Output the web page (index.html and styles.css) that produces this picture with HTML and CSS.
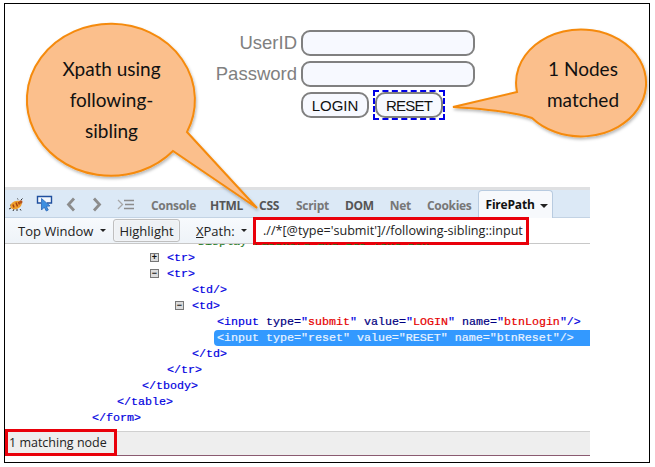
FILE: index.html
```html
<!DOCTYPE html>
<html lang="en">
<head>
<meta charset="utf-8">
<title>Xpath using following-sibling</title>
<link rel="stylesheet" href="styles.css">
</head>
<body>
<div class="frame">
  <section class="login">
    <div class="login-grid">
      <label class="lbl">UserID</label><div class="field"></div>
      <label class="lbl">Password</label><div class="field"></div>
      <span></span>
      <div class="btns">
        <button class="btn">LOGIN</button>
        <span class="focus"><button class="btn btn-reset">RESET</button></span>
      </div>
    </div>
  </section>

  <section class="panel">
    <div class="tabs">
      <div class="tab-icons">
        <svg class="ic" width="16" height="14" viewBox="0 0 16 14"><path d="M1 11l2-1M2 7l2 .5M5 13l1-2M9 13v-2M12 11l1 1.500M13 2l1.500-1.500M10 1.500L9.500.5" stroke="#333" stroke-width="1"/><ellipse cx="8" cy="7" rx="6" ry="4" fill="#eea02e" transform="rotate(-22 8 7)"/><path d="M5 6.500l1 3M8 4.500l1.500 4M10.500 4l1 2.500" stroke="#a8420f" stroke-width="1.500"/><circle cx="12.800" cy="4" r="1.700" fill="#b5521a"/></svg>
        <svg class="ic ic-inspect" width="17" height="17" viewBox="0 0 17 17"><path d="M5 8H1.500V1.500h14V8H11" fill="#f4f8fd" stroke="#1f4f9e" stroke-width="1.400"/><path d="M5.500 3.500V15l2.800-2.800 2 3.800 2-1-2-3.700 3.700-.4z" fill="#3d8fe0" stroke="#2a66b8" stroke-width=".8"/></svg>
        <svg class="ic ic-back" width="10" height="15" viewBox="0 0 10 15"><path d="M8 1.500L2.500 7.500 8 13.500" fill="none" stroke="#8c8c8c" stroke-width="2.800"/></svg>
        <svg class="ic ic-fwd" width="10" height="15" viewBox="0 0 10 15"><path d="M2 1.500L7.500 7.500 2 13.500" fill="none" stroke="#8c8c8c" stroke-width="2.800"/></svg>
        <svg class="ic ic-cmd" width="17" height="11" viewBox="0 0 17 11"><path d="M1 1l4.500 4.500L1 10" fill="none" stroke="#a8a8a8" stroke-width="1.300"/><path d="M7 1.500h10M8 5.500h9M7 9.500h10" stroke="#8c8c8c" stroke-width="1.300"/></svg>
      </div>
      <nav class="tab-list">
        <span class="tab tab-dim tab-console">Console</span>
        <span class="tab tab-html">HTML</span>
        <span class="tab tab-css">CSS</span>
        <span class="tab tab-dim tab-script">Script</span>
        <span class="tab tab-dom">DOM</span>
        <span class="tab tab-dim tab-net">Net</span>
        <span class="tab tab-dim tab-cookies">Cookies</span>
        <span class="tab-active">FirePath <i class="caret"></i></span>
      </nav>
    </div>
    <div class="toolbar">
      <span class="tool tool-window">Top Window <i class="caret caret-sm"></i></span>
      <span class="tool tool-highlight">Highlight</span>
      <span class="tool tool-xpath"><u>X</u>Path: <i class="caret caret-sm"></i></span>
      <div class="expr">.//*[@type='submit']//following-sibling::input</div>
    </div>
    <div class="tree">
      <div class="row row-clipped comment">Display Password and Its Text box</div>
      <div class="row l3"><span class="tw">+</span><span class="t">&lt;tr&gt;</span></div>
      <div class="row l3"><span class="tw">&minus;</span><span class="t">&lt;tr&gt;</span></div>
      <div class="row l4"><span class="t">&lt;td/&gt;</span></div>
      <div class="row l4"><span class="tw">&minus;</span><span class="t">&lt;td&gt;</span></div>
      <div class="row l5"><span class="t">&lt;input</span> <span class="a">type=</span><span class="t">"</span><span class="v">submit</span><span class="t">"</span> <span class="a">value=</span><span class="t">"</span><span class="v">LOGIN</span><span class="t">"</span> <span class="a">name=</span><span class="t">"</span><span class="v">btnLogin</span><span class="t">"/&gt;</span></div>
      <div class="row l5 selected">&lt;input type="reset" value="RESET" name="btnReset"/&gt;</div>
      <div class="row l4"><span class="t">&lt;/td&gt;</span></div>
      <div class="row l3"><span class="t">&lt;/tr&gt;</span></div>
      <div class="row l2"><span class="t">&lt;/tbody&gt;</span></div>
      <div class="row l1"><span class="t">&lt;/table&gt;</span></div>
      <div class="row l0"><span class="t">&lt;/form&gt;</span></div>
    </div>
    <div class="status"><span class="status-box">1 matching node</span></div>
  </section>

  <svg class="callouts" width="644" height="458" viewBox="0 0 644 458">
    <defs><filter id="sh" x="-10%" y="-10%" width="125%" height="125%"><feDropShadow dx="1" dy="2" stdDeviation="1.500" flood-color="#000" flood-opacity=".28"/></filter></defs>
    <path filter="url(#sh)" d="M168 147 A84 76 0 1 1 182 128 L252 204 Z" fill="#fbbf8c" stroke="#f58a0b" stroke-width="2"/>
    <path filter="url(#sh)" d="M512 88 A65 53.500 0 1 1 527 114 C510 108 480 105 448 103 Z" fill="#fbbf8c" stroke="#f58a0b" stroke-width="2"/>
  </svg>
  <div class="note note-left">Xpath using<br>following-<br>sibling</div>
  <div class="note note-right">1 Nodes<br>matched</div>
</div>
</body>
</html>
```
FILE: styles.css
```css
*, *::before { box-sizing: border-box; }
html, body { margin: 0; padding: 0; background: #fff; }
body { width: 655px; height: 467px; overflow: hidden; padding: 3px 0 0 4px; font-family: "Liberation Sans", Arial, sans-serif; }

.frame { position: relative; width: 646px; height: 460px; border: 1px solid #000; background: #fff; }

/* login form */
.login { height: 183px; padding: 26px 0 0 196px; }
.login-grid { display: grid; grid-template-columns: 96px 174px; grid-auto-rows: 26px; column-gap: 4px; row-gap: 5px; align-items: center; }
.lbl { text-align: right; color: #808080; font-size: 18.500px; }
.field { height: 26px; border: 2px solid #808080; border-radius: 9px; background: #f7f9ff; }
.btns { display: flex; align-items: center; gap: 6px; }
.btn { display: block; width: 68px; height: 26px; padding: 0; border: 2px solid #808080; border-radius: 10px; background: #f7f9ff; color: #111; font: 15px "Liberation Sans", Arial, sans-serif; }
.btn-reset { letter-spacing: -.8px; }
.focus { display: block; outline: 2px dashed #0000e6; }

/* panel */
.panel { width: 585px; height: 269px; display: flex; flex-direction: column; font-family: "Open Sans", "Liberation Sans", sans-serif; }
.tabs { height: 31px; flex: none; display: flex; background: #dce9f6; border-top: 3px solid #dfe0e2; border-bottom: 1px solid #c3d3e4; }
.tab-icons { width: 146px; flex: none; display: flex; align-items: center; padding-top: 2px; }
.ic { flex: none; }
.ic:first-child { margin-left: 3px; }
.ic-inspect { margin: -3px 0 0 12px; }
.ic-back { margin-left: 13px; }
.ic-fwd { margin-left: 16px; }
.ic-cmd { margin-left: 15px; }
.tab-list { display: flex; align-items: center; flex: 1; }
.tab { font-size: 12px; font-weight: 700; color: #555; padding-top: 3px; letter-spacing: -.3px; }
.tab-dim { color: #777; }
.tab-console { margin-right: 14px; }
.tab-html { margin-right: 16px; }
.tab-css { margin-right: 17px; }
.tab-script { margin-right: 16px; }
.tab-dom { margin-right: 16px; }
.tab-net { margin-right: 16px; }
.tab-cookies { margin-right: 6px; }
.tab-active { align-self: stretch; width: 75px; margin-bottom: -1px; padding: 5px 0 0 7px; font-size: 12px; font-weight: 700; color: #111; letter-spacing: -.2px; background: #f7f9fc; border: 1px solid #b8cbe0; border-bottom: 0; border-radius: 4px 4px 0 0; }
.caret { display: inline-block; width: 0; height: 0; margin: 0 0 1px 2px; border: 4px solid transparent; border-top-color: #222; border-bottom: 0; }
.caret-sm { border-width: 3px; border-bottom: 0; margin-left: 3px; vertical-align: 2px; }

.toolbar { height: 26px; flex: none; display: flex; align-items: stretch; position: relative; background: linear-gradient(#f7fafd, #eef3f8); border-bottom: 1px solid #c8c8c8; font-size: 13px; color: #222; }
.tool { display: flex; align-items: center; white-space: pre; }
.tool-window { width: 108px; padding-left: 13px; }
.tool-highlight { width: 67px; margin-top: 1px; margin-bottom: 1px; justify-content: center; background: #eef1f4; border: 1px solid #bfbfbf; border-radius: 3px; box-shadow: inset 0 0 2px #fff; }
.tool-xpath { width: 74px; padding-left: 16px; }
.expr { flex: 1; display: flex; align-items: center; padding-left: 9px; background: #fff; font-size: 12.600px; position: relative; }
.expr::before { content: ""; position: absolute; left: -1px; top: -1px; width: 276px; height: 28px; border: 3px solid #e9000a; }

.tree { flex: 1; min-height: 0; overflow: hidden; background: #fff; font: 11.670px/16px "Liberation Mono", "Courier New", monospace; color: #0000e0; }
.row { height: 16px; white-space: pre; position: relative; -webkit-text-stroke: .2px currentColor; }
.row-clipped { margin-top: -10px; padding-left: 193px; }
.comment { color: #1d7a1d; }
.l0 { padding-left: 87px; }
.l1 { padding-left: 112px; }
.l2 { padding-left: 137px; }
.l3 { padding-left: 162px; }
.l4 { padding-left: 187px; }
.l5 { padding-left: 212px; }
.t { color: #0000e0; }
.a { color: #000080; }
.v { color: #e60000; }
.tw { position: absolute; margin-left: -17px; margin-top: 3px; width: 9px; height: 9px; display: flex; align-items: center; justify-content: center; font: bold 9px/9px "Liberation Sans", sans-serif; color: #111; border: 1px solid #777; background: #dcdcdc; -webkit-text-stroke: 0; }
.selected { margin-left: 209px; padding-left: 3px; background: #3399ff; color: #e8f3ff; border-top-left-radius: 4px; border-bottom-left-radius: 4px; }

.status { height: 25px; flex: none; background: #eeeeee; border-top: 1px solid #d0d0d0; border-bottom: 1px solid #8a5a70; font-size: 12.500px; color: #222; }
.status-box { display: flex; align-items: center; position: relative; width: 112px; height: 27px; margin-top: -3px; padding: 0 0 0 1px; border: 3px solid #e9000a; white-space: nowrap; }

/* callouts */
.callouts { position: absolute; left: 0; top: 0; pointer-events: none; }
.note { position: absolute; text-align: center; color: #111; font-family: Lato, "Liberation Sans", sans-serif; font-size: 19px; line-height: 31px; }
.note-left { left: 44px; top: 49px; width: 125px; }
.note-right { left: 533px; top: 49px; width: 90px; }
```
